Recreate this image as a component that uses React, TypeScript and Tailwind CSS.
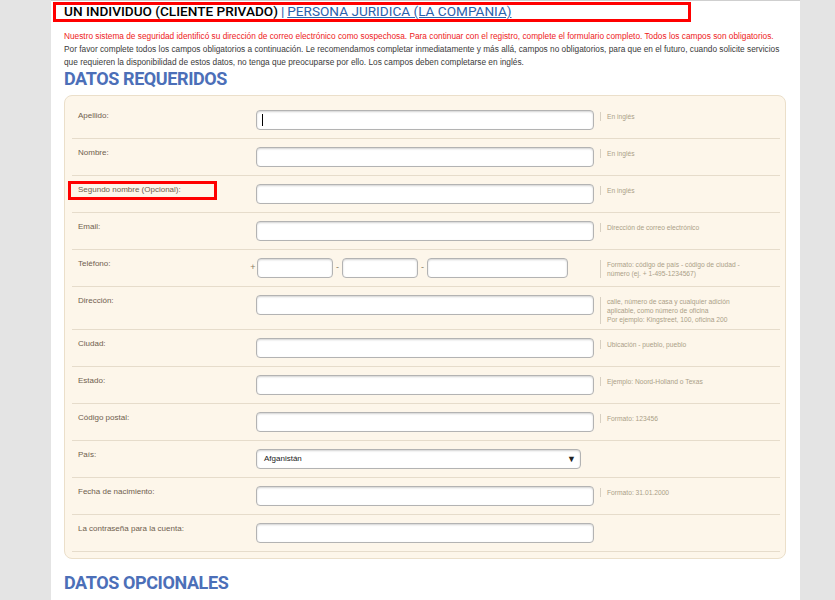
import React from "react";

type Row = {
  label: string;
  hint?: string[];
  type?: "text" | "phone" | "select";
  cursor?: boolean;
  boxed?: boolean;
};

const rows: Row[] = [
  { label: "Apellido:", hint: ["En inglés"], cursor: true },
  { label: "Nombre:", hint: ["En inglés"] },
  { label: "Segundo nombre (Opcional):", hint: ["En inglés"], boxed: true },
  { label: "Email:", hint: ["Dirección de correo electrónico"] },
  {
    label: "Teléfono:",
    type: "phone",
    hint: ["Formato: código de país - código de ciudad -", "número (ej. + 1-495-1234567)"],
  },
  {
    label: "Dirección:",
    hint: [
      "calle, número de casa y cualquier adición",
      "aplicable, como número de oficina",
      "Por ejemplo: Kingstreet, 100, oficina 200",
    ],
  },
  { label: "Ciudad:", hint: ["Ubicación - pueblo, pueblo"] },
  { label: "Estado:", hint: ["Ejemplo: Noord-Holland o Texas"] },
  { label: "Código postal:", hint: ["Formato: 123456"] },
  { label: "País:", type: "select" },
  { label: "Fecha de nacimiento:", hint: ["Formato: 31.01.2000"] },
  { label: "La contraseña para la cuenta:" },
];

const inputCls =
  "h-[20px] rounded-[4px] border border-[#b3b3b3] bg-white shadow-[inset_0_1px_2px_rgba(0,0,0,0.18)]";

function Field({ row }: { row: Row }) {
  if (row.type === "phone") {
    return (
      <div className="flex items-center -ml-[7px]">
        <span className="w-[8px] text-center text-[9px] text-[#8a7a62]">+</span>
        <div className={`${inputCls} w-[76px]`} />
        <span className="w-[9px] text-center text-[9px] text-[#8a7a62]">-</span>
        <div className={`${inputCls} w-[76px]`} />
        <span className="w-[9px] text-center text-[9px] text-[#8a7a62]">-</span>
        <div className={`${inputCls} w-[141px]`} />
      </div>
    );
  }
  if (row.type === "select") {
    return (
      <div className={`${inputCls} w-[325px] flex items-center justify-between pl-[7px] pr-[4px]`}>
        <span className="text-[8px] text-[#222]">Afganistán</span>
        <span className="text-[9px] leading-none text-[#222]">▼</span>
      </div>
    );
  }
  return (
    <div className={`${inputCls} w-[338px] flex items-center pl-[5px]`}>
      {row.cursor && <div className="w-px h-[12px] bg-black" />}
    </div>
  );
}

export default function App() {
  return (
    <div
      className="w-[835px] h-[600px] overflow-hidden bg-[#e4e4e4] pl-[51px] pr-[35px] flex"
      style={{ fontFamily: "'Liberation Sans', Arial, sans-serif" }}
    >
      <div className="w-[749px] bg-white border-t border-[#cfcfcf] pl-[13px] pr-[14px] pt-[1px]">
        {/* header tabs */}
        <div className="-ml-[11px] w-[638px] h-[20px] border-[3px] border-[#ff0000] flex items-center pl-[8px] text-[13.6px] leading-none" style={{ fontFamily: "Roboto, sans-serif" }}>
          <span className="text-black font-medium">UN INDIVIDUO (CLIENTE PRIVADO)</span>
          <span className="text-[#2b62ad] px-[3px]">|</span>
          <span className="text-[#2b62ad] underline">PERSONA JURIDICA (LA COMPANIA)</span>
        </div>

        {/* notice */}
        <div className="mt-[8px] text-[8.3px] leading-[13px] text-[#3a3a3a]">
          <div className="text-[#ee1a1a]">
            Nuestro sistema de seguridad identificó su dirección de correo electrónico como sospechosa. Para continuar con el registro, complete el formulario completo. Todos los campos son obligatorios.
          </div>
          <div>
            Por favor complete todos los campos obligatorios a continuación. Le recomendamos completar inmediatamente y más allá, campos no obligatorios, para que en el futuro, cuando solicite servicios que requieren la disponibilidad de estos datos, no tenga que preocuparse por ello. Los campos deben completarse en inglés.
          </div>
        </div>

        <h2 className="text-[18px] leading-[20px] font-bold text-[#4c6fb8] tracking-[-0.4px]" style={{ fontFamily: "Roboto, sans-serif" }}>
          DATOS REQUERIDOS
        </h2>

        {/* required form */}
        <div className="mt-[6px] rounded-[8px] border border-[#ebdfca] bg-[#fdf6ea] pt-[6px] pb-[6px] pl-[7px] pr-[5px]">
          {rows.map((row) => (
            <div key={row.label} className="flex items-stretch">
              <div className="w-[178px] border-b border-[#e6dccb] pl-[6px] pt-[9px] text-[8px] leading-[10px] text-[#6f604e]">
                {row.boxed ? (
                  <div className="-ml-[10px] -mt-[4px] w-[149px] h-[19px] border-[3px] border-[#ff0000] pl-[7px] pt-[1px]">
                    {row.label}
                  </div>
                ) : (
                  row.label
                )}
              </div>
              <div className="flex-1 flex border-b border-[#e6dccb] min-h-[36px]">
                <div className="w-[350px] pl-[6px] pt-[8px] pb-[8px]">
                  <Field row={row} />
                </div>
                {row.hint && (
                  <div className="pt-[10px] pb-[5px]">
                    <div className="border-l border-[#d8d0c2] pl-[6px] text-[6.7px] leading-[9px] text-[#ab9f88]">
                      {row.hint.map((h) => (
                        <div key={h}>{h}</div>
                      ))}
                    </div>
                  </div>
                )}
              </div>
            </div>
          ))}
        </div>

        <h2 className="mt-[14px] text-[18px] leading-[20px] font-bold text-[#4c6fb8] tracking-[-0.4px]" style={{ fontFamily: "Roboto, sans-serif" }}>
          DATOS OPCIONALES
        </h2>
      </div>
    </div>
  );
}
